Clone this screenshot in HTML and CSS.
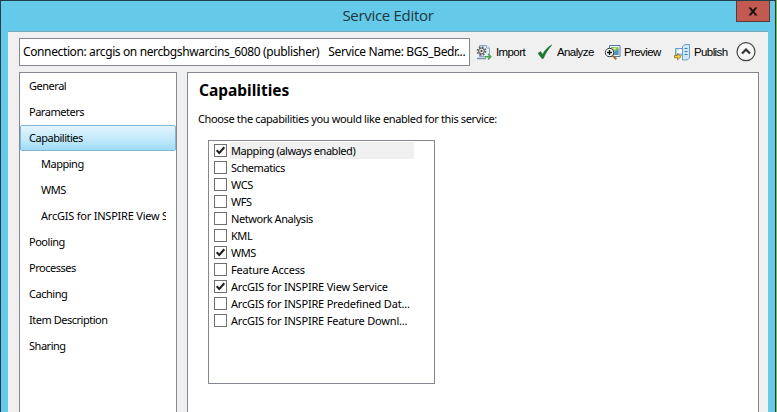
FILE: index.html
```
<!DOCTYPE html>
<html lang="en">
<head>
<meta charset="utf-8">
<title>Service Editor</title>
<link rel="stylesheet" href="styles.css">
</head>
<body>
<div class="window">
  <header class="titlebar">
    <h1 class="title">Service Editor</h1>
    <button class="close" aria-label="Close"><svg width="10" height="9" viewBox="0 0 10 9"><path d="M0.5 0.5H3L5 3.1L7 0.5H9.3L6.3 4.4L9.5 8.5H7L5 5.8L3 8.5H0.5L3.7 4.4Z" fill="#111"/></svg></button>
  </header>
  <main class="client">
    <div class="toolbar">
      <div class="connection"><span class="conn">Connection: arcgis on nercbgshwarcins_6080 (publisher)</span><span class="service">Service Name: BGS_Bedr...</span></div>
      <div class="tool import"><svg width="16" height="17" viewBox="0 0 16 17"><path d="M3.5 1.5H10.5L13.5 4V12.5H3.5Z" fill="#e4effa" stroke="#8ba7c7"/><path d="M10.5 1.5V4H13.5" fill="#fff" stroke="#8ba7c7"/><path d="M1 14.5H10" stroke="#7897b8" stroke-width="1.6"/><circle cx="5.5" cy="7" r="4" fill="none" stroke="#666" stroke-width="1.8" stroke-dasharray="1.7 1.44"/><circle cx="5.5" cy="7" r="2.9" fill="#ddd" stroke="#555"/><circle cx="5.5" cy="7" r="1.1" fill="#444"/><path d="M9 12.7H14M12 10L14.7 12.7L12 15.4" fill="none" stroke="#48a548" stroke-width="1.6"/></svg><span>Import</span></div>
      <div class="tool analyze"><svg width="16" height="17" viewBox="0 0 16 17"><path d="M1 9.3L3.6 7.6L5.6 10.4C8 6 11 2.8 14.8 1C11.5 4.7 8.7 9 6.3 14.5H5Z" fill="#187b35" stroke="#126129" stroke-width=".5"/></svg><span>Analyze</span></div>
      <div class="tool preview"><svg width="17" height="17" viewBox="0 0 17 17"><path d="M5.5 1.5H16V12.5H5.5Z" fill="#f5faff" stroke="#53799c"/><path d="M7 3H14.5V11H7Z" fill="#80bd65"/><path d="M11 7L14.5 5V11H10Z" fill="#4d91ca"/><path d="M8 4L13 3.5L11 6" fill="#e8ec8a"/><circle cx="5.5" cy="8.5" r="4.2" fill="#fff" stroke="#333"/><path d="M3 8.5H8M5.5 6V11" stroke="#111" stroke-width="1.4"/><path d="M8.8 11.8L12.3 15.3" stroke="#a46d39" stroke-width="2"/></svg><span>Preview</span></div>
      <div class="tool publish"><svg width="17" height="17" viewBox="0 0 17 17"><path d="M1.5 4.5H9V11H1.5Z" fill="#b4dcf7" stroke="#6d9cc6"/><path d="M3 7L6 5L8 6V9H3Z" fill="#fff"/><path d="M8.5 2.5L11 .5H15.5V14L13 16H8.5Z" fill="#cfe8f8" stroke="#6d9fc6"/><path d="M10.5 4.5H13.5M10.5 7.5H13.5M10.5 10.5H13.5" stroke="#387db3"/><path d="M.5 11.5H3.5V9.5L7 12.5L3.5 15.8V13.7H.5Z" fill="#f5cf35" stroke="#8c6b15" stroke-width=".8"/></svg><span>Publish</span></div>
      <button class="collapse" aria-label="Collapse"><svg width="20" height="20" viewBox="0 0 20 20"><circle cx="10" cy="9.7" r="9" fill="#f6f6f6" stroke="#444" stroke-width="1.2"/><path d="M6 11.5L10 7.5L14 11.5" fill="none" stroke="#333" stroke-width="2.2"/></svg></button>
    </div>
    <div class="panes">
      <nav class="nav">
        <div class="item">General</div>
        <div class="item">Parameters</div>
        <div class="item selected">Capabilities</div>
        <div class="item child">Mapping</div>
        <div class="item child">WMS</div>
        <div class="item child"><span class="clip">ArcGIS for INSPIRE View Service</span></div>
        <div class="item">Pooling</div>
        <div class="item">Processes</div>
        <div class="item">Caching</div>
        <div class="item">Item Description</div>
        <div class="item">Sharing</div>
      </nav>
      <section class="content">
        <h2>Capabilities</h2>
        <p>Choose the capabilities you would like enabled for this service:</p>
        <div class="list">
          <div class="row on active"><i></i><span>Mapping (always enabled)</span></div>
          <div class="row"><i></i><span>Schematics</span></div>
          <div class="row"><i></i><span>WCS</span></div>
          <div class="row"><i></i><span>WFS</span></div>
          <div class="row"><i></i><span>Network Analysis</span></div>
          <div class="row"><i></i><span>KML</span></div>
          <div class="row on"><i></i><span>WMS</span></div>
          <div class="row wide"><i></i><span>Feature Access</span></div>
          <div class="row wide on"><i></i><span>ArcGIS for INSPIRE View Service</span></div>
          <div class="row wide"><i></i><span>ArcGIS for INSPIRE Predefined Dat...</span></div>
          <div class="row wide"><i></i><span>ArcGIS for INSPIRE Feature Downl...</span></div>
        </div>
      </section>
    </div>
  </main>
</div>
<script src="script.js"></script>
</body>
</html>
```
FILE: script.js
```
document.querySelectorAll('.row.on i').forEach(function (box) {
  box.innerHTML = '<svg width="11" height="11" viewBox="0 0 11 11"><path d="M1.7 5.2L4.3 8L9.3 2.3" fill="none" stroke="#222" stroke-width="2.1"/></svg>';
});
```
FILE: styles.css
```
* { box-sizing: border-box; }
body { margin: 0; width: 777px; height: 412px; overflow: hidden; background: #8cb93c; font: 11px/17px "Noto Sans", sans-serif; color: #000; }
button { border: 0; padding: 0; background: none; }
svg { display: block; flex: none; }
.window { width: 776px; height: 412px; padding: 0 7px; background: #65c9ea; border: solid #203f4c; border-width: 1px 1px 0; display: flex; flex-direction: column; }
.titlebar { height: 30px; flex: none; display: grid; grid-template-columns: 34px 1fr 34px; margin-right: -2px; }
.title { grid-column: 2; margin: 0; text-align: center; font: 400 15px/28px "Open Sans", sans-serif; letter-spacing: -.3px; color: #20363f; padding-right: 2px; }
.close { height: 21px; background: #c35a51; border: 1px solid #5c3936; border-top: 0; display: flex; align-items: center; justify-content: center; }
.client { flex: 1; min-height: 0; background: #f0f0f0; border-top: 1px solid #72a9bc; padding: 6px 9px 0 11px; display: flex; flex-direction: column; }
.toolbar { height: 28px; margin-bottom: 6px; flex: none; display: flex; align-items: center; }
.connection { width: 451px; height: 28px; flex: none; border: 1px solid #828790; background: #fff; padding-left: 3px; display: flex; gap: 9px; font-size: 12px; line-height: 26px; white-space: nowrap; }
.conn { letter-spacing: -.38px; }
.service { letter-spacing: -.38px; }
.tool { display: flex; align-items: center; gap: 4px; height: 28px; flex: none; white-space: nowrap; font: 11.5px/26px "Liberation Sans", sans-serif; letter-spacing: -.6px; }
.import { margin-left: 6px; width: 61px; }
.analyze { width: 67px; }
.preview { width: 70px; }
.publish { width: 61px; }
.publish, .preview { gap: 3px; }
.collapse { margin-left: 1px; flex: none; }
.panes { flex: 1; min-height: 0; display: flex; gap: 10px; }
.nav { width: 158px; flex: none; border: 1px solid #828790; border-bottom: 0; background: #fff; letter-spacing: -.48px; }
.item { height: 26px; line-height: 26px; padding-left: 9px; white-space: nowrap; }
.selected { border: 1px solid #84b6d9; border-radius: 2px; padding-left: 8px; line-height: 24px; background: linear-gradient(#e4f5fd, #bfe8fa 60%, #9edbf7); }
.child { padding-left: 21px; }
.clip { display: block; width: 125px; overflow: hidden; letter-spacing: -.22px; }
.content { width: 572px; flex: none; border: 1px solid #828790; border-bottom: 0; background: #fff; padding: 6px 0 0 11px; }
h2 { margin: 0; font: 700 15.5px/22px "Noto Sans", sans-serif; }
p { margin: 9px 0 0 -1px; letter-spacing: -.365px; }
.list { margin: 13px 0 0 9px; width: 227px; height: 244px; border: 1px solid #828790; padding: 1px 5px; letter-spacing: -.44px; }
.row { height: 17px; display: flex; align-items: center; gap: 3px; white-space: nowrap; }
.row i { width: 13px; height: 13px; border: 1px solid #707070; flex: none; }
.row span { width: 184px; padding-left: 1px; line-height: 17px; }
.wide { letter-spacing: -.2px; }
.active span { background: #f0f0f0; }
```
